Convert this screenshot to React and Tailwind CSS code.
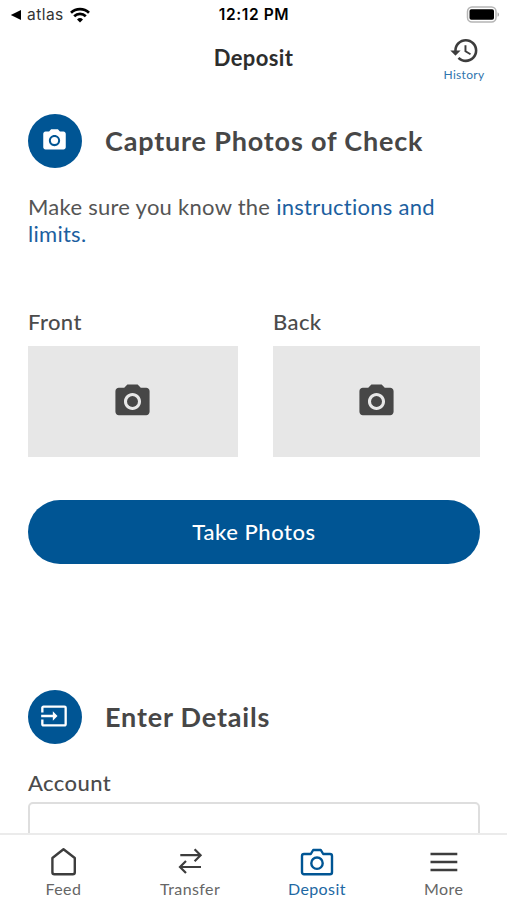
import { MdHistory, MdInput, MdPhotoCamera } from "react-icons/md";

function StatusBar() {
  return (
    <div className="h-[30px] shrink-0 grid grid-cols-3 items-center pl-2.5 pr-[7px] font-['Inter',sans-serif] text-black">
      <div className="flex items-center">
        <svg width="12" height="12" viewBox="0 0 12 12" fill="currentColor">
          <path d="M11 1v10L0.8 6z" />
        </svg>
        <span className="ml-[5px] text-[15.5px] leading-[30px] tracking-[0.45px] text-[#333]">atlas</span>
        <svg className="ml-[6px]" width="20" height="16" viewBox="0 0 20 16" fill="none" stroke="currentColor" strokeWidth="2.7">
          <path d="M1 5.8a12.9 12.9 0 0 1 18 0" />
          <path d="M4.2 9.2a8.3 8.3 0 0 1 11.6 0" />
          <path d="M10 15.4l-3-3a4.3 4.3 0 0 1 6 0z" fill="currentColor" stroke="none" />
        </svg>
      </div>
      <p className="pr-0.5 text-center text-[15.5px] leading-[30px] font-semibold tracking-[0.6px] whitespace-nowrap">
        12:12 PM
      </p>
      <svg className="justify-self-end mb-[2px]" width="34" height="17" viewBox="0 0 34 17">
        <rect x="1.5" y="1" width="28.5" height="15" rx="4.5" fill="#fff" stroke="#b5b5b5" strokeWidth="1.5" />
        <rect x="3.5" y="3.2" width="24.5" height="10.6" rx="1.8" fill="#000" />
        <path d="M31.6 6.2c1.8.8 1.8 3.8 0 4.6z" fill="#a0a0a0" />
      </svg>
    </div>
  );
}

function Header() {
  return (
    <header className="h-[60px] shrink-0 grid grid-cols-3 pr-[15px] pl-[15px]">
      <h1 className="col-start-2 text-center text-[22px] leading-[56px] font-bold tracking-[0.35px] text-[#2d2d2d]">
        Deposit
      </h1>
      <button className="justify-self-end w-[56px] pt-[5px] flex flex-col items-center">
        <MdHistory size={31} className="text-[#3d3d3d]" />
        <span className="text-[12px] leading-[18px] tracking-[0.3px] text-[#2f75ae]">History</span>
      </button>
    </header>
  );
}

function SectionTitle({ icon, children }) {
  return (
    <div className="flex items-center gap-[23px]">
      <div className="w-[54px] h-[54px] pr-0.5 pb-[1.5px] rounded-full bg-[#005594] text-white flex items-center justify-center">
        {icon}
      </div>
      <h2 className="text-[27px] leading-[54px] font-bold tracking-[0.82px] whitespace-nowrap text-[#474747]">
        {children}
      </h2>
    </div>
  );
}

function PhotoSlot({ label }) {
  return (
    <div>
      <p className="text-[22px] leading-[30px] font-medium tracking-[0.4px] text-[#4b4b4b]">{label}</p>
      <div className="mt-[9px] h-[111px] pr-px pb-px bg-[#e7e7e7] flex items-center justify-center">
        <MdPhotoCamera size={41} className="text-[#474747]" />
      </div>
    </div>
  );
}

const tabs = [
  {
    label: "Feed",
    icon: (
      <svg width="34" height="30" viewBox="0 0 34 30" fill="none" stroke="currentColor" strokeWidth="2.4" strokeLinejoin="round">
        <path d="M17.5 2.3L28.8 11v14.2a2 2 0 0 1-2 2H8.4a2 2 0 0 1-2-2V11z" />
      </svg>
    ),
  },
  {
    label: "Transfer",
    icon: (
      <svg width="34" height="30" viewBox="0 0 34 30" fill="none" stroke="currentColor" strokeWidth="2.2">
        <path d="M7.3 8.2h20M21.6 2.2l6 6-6 6" />
        <path d="M28 20H7.2M13 14l-6 6 6 6" />
      </svg>
    ),
  },
  {
    label: "Deposit",
    active: true,
    icon: (
      <svg width="34" height="30" viewBox="0 0 34 30" fill="none" stroke="currentColor" strokeWidth="2.4" strokeLinejoin="round">
        <path d="M4 7h6.8l2.4-4h7.6l2.4 4H30a2 2 0 0 1 2 2v16.3a2 2 0 0 1-2 2H4a2 2 0 0 1-2-2V9a2 2 0 0 1 2-2z" />
        <circle cx="17" cy="16.2" r="5.7" />
      </svg>
    ),
  },
  {
    label: "More",
    icon: (
      <svg width="34" height="30" viewBox="0 0 34 30" fill="none" stroke="currentColor" strokeWidth="2.6">
        <path d="M3.5 7h26.8M3.5 15h26.8M3.5 23h26.8" />
      </svg>
    ),
  },
];

function TabBar() {
  return (
    <nav className="h-[67px] shrink-0 border-t-2 border-[#ebebeb] bg-white grid grid-cols-4">
      {tabs.map((tab) => (
        <button
          key={tab.label}
          className={`pt-3 flex flex-col items-center ${tab.active ? "text-[#005594]" : "text-[#3d3d3d]"}`}
        >
          {tab.icon}
          <span
            className={`mt-px text-[16px] leading-[22px] tracking-[0.4px] ${tab.active ? "text-[#2168a3]" : "text-[#666]"}`}
          >
            {tab.label}
          </span>
        </button>
      ))}
    </nav>
  );
}

export default function App() {
  return (
    <div className="w-[507px] h-[900px] overflow-hidden bg-white flex flex-col font-['Lato',sans-serif]">
      <StatusBar />
      <Header />

      <main className="flex-1 min-h-0 overflow-hidden pl-7 pr-[27px] pt-6">
        <SectionTitle icon={<MdPhotoCamera size={27} />}>Capture Photos of Check</SectionTitle>

        <p className="mt-[25px] text-[22px] leading-[27px] tracking-[0.27px] text-[#555]">
          Make sure you know the <a className="text-[#1c609f]">instructions and<br />limits.</a>
        </p>

        <div className="mt-[60px] grid grid-cols-[210px_207px] gap-[35px]">
          <PhotoSlot label="Front" />
          <PhotoSlot label="Back" />
        </div>

        <button className="mt-[43px] w-full h-[64px] pb-0.5 rounded-full bg-[#005594] text-[22px] font-medium tracking-[0.55px] text-white">
          Take Photos
        </button>

        <section className="mt-[126px]">
          <SectionTitle icon={<MdInput size={28} />}>Enter Details</SectionTitle>
          <label className="block mt-6 text-[22px] leading-[30px] font-medium tracking-[0.4px] text-[#4b4b4b]">
            Account
          </label>
          <div className="mt-1 h-[64px] rounded-[5px] border-2 border-[#dedede]" />
        </section>
      </main>

      <TabBar />
    </div>
  );
}
